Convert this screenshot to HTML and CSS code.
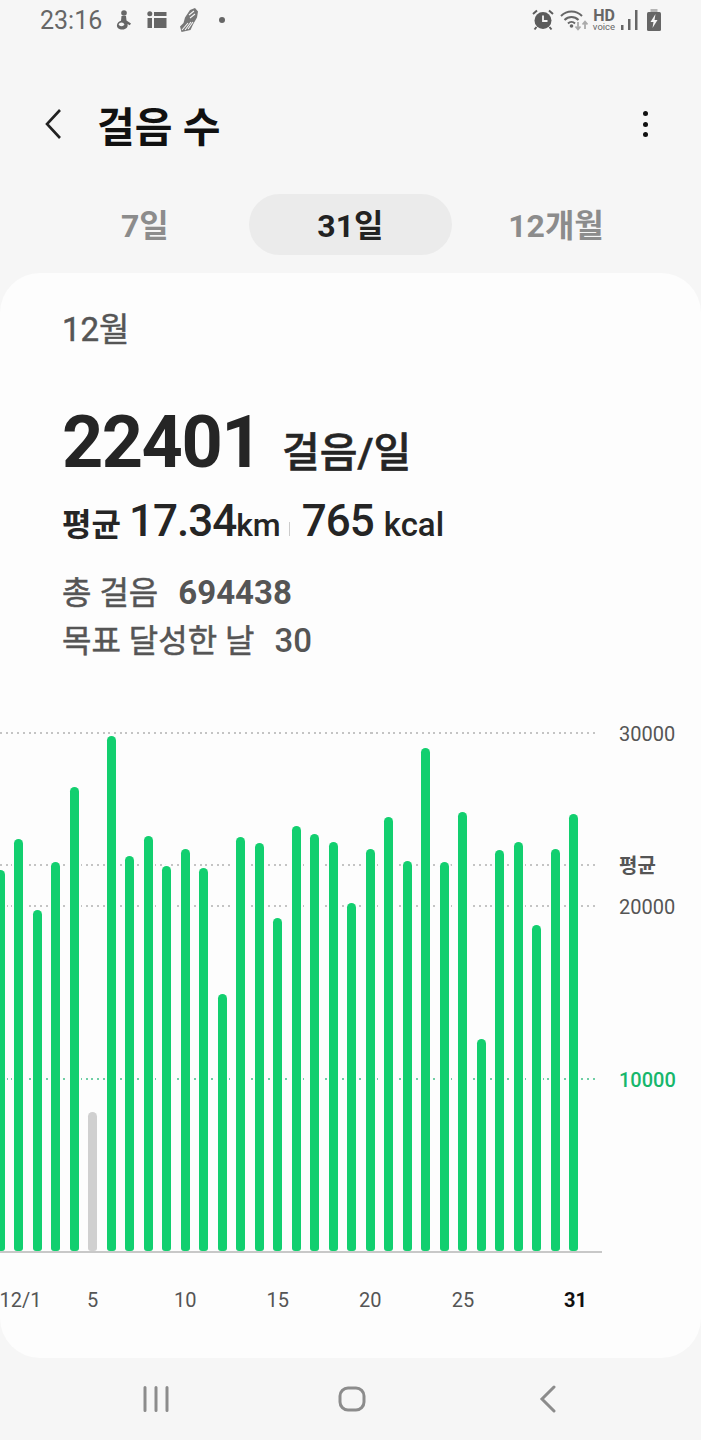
FILE: index.html
```html
<!DOCTYPE html>
<html lang="ko">
  <head>
    <meta charset="utf-8">
    <title>걸음 수</title>
    <link rel="stylesheet" href="styles.css">
  </head>
  <body>
    <div class="status">
      <div class="status-left">
        <span class="time">23:16</span>
        <svg class="ico-walk" width="18" height="20" viewBox="0 0 18 20"><circle cx="10" cy="3" r="2.800" fill="#666"/><path d="M7.500 6h4.500l.5 4.500 4.500 3-1.200 1.800-2.300-1.300c.8 3.200-1.500 5.500-5 5.500-3.800 0-6-2-5.500-4.800.4-2.200 2.500-3.400 4-3.900z" fill="#666"/><ellipse cx="7.500" cy="14.300" rx="2.600" ry="1.900" fill="#f6f6f6"/></svg>
        <svg class="ico-table" width="20" height="18" viewBox="0 0 20 18"><circle cx="2.800" cy="2.800" r="2.500" fill="#666"/><rect x="7" y="1" width="12.500" height="4" fill="#666"/><rect x="0.500" y="7" width="4.500" height="10" fill="#666"/><rect x="7" y="7" width="12.500" height="10" fill="#666"/></svg>
        <svg class="ico-shoe" width="20" height="24" viewBox="0 0 20 24"><path d="M11 2l5-2 3 3.500-1 6-4 7-2.500 5.500-9 2-1.500-5.500 3.500-3.500 1.500-5.500z" fill="#777"/><path d="M3 22l6-7M6 22l6-8M9 21l5-7M10 7l5-4M11 10l5-4" stroke="#f6f6f6" stroke-width="1.100" fill="none"/></svg>
        <span class="dot"></span>
      </div>
      <div class="status-right">
        <svg width="22" height="22" viewBox="0 0 22 22"><path d="M1 5l4-3.500M21 5l-4-3.500" stroke="#5c5c5c" stroke-width="2" fill="none"/><circle cx="11" cy="11.500" r="8.500" fill="#5c5c5c"/><path d="M11 6.500v5.500h4.500" stroke="#f6f6f6" stroke-width="1.800" fill="none"/><path d="M4.500 18l-2 2.500M17.500 18l2 2.500" stroke="#5c5c5c" stroke-width="2"/></svg>
        <svg class="ico-wifi" width="28" height="22" viewBox="0 0 28 22"><path d="M1 7c6-6 15-6 21 0M4.500 11c4-4 10-4 14 0M8 14.500c2-2 5-2 7 0" stroke="#666" stroke-width="2" fill="none"/><circle cx="11.500" cy="17" r="1.800" fill="#666"/><path d="M18 13v7M15.500 17.500l2.500 2.800 2.500-2.800" stroke="#aaa" stroke-width="1.800" fill="none"/><path d="M25 20v-7M22.500 15.500l2.500-2.800 2.500 2.800" stroke="#aaa" stroke-width="1.800" fill="none"/></svg>
        <span class="hd"><b>HD</b><i>voice</i></span>
        <svg class="ico-signal" width="17" height="20" viewBox="0 0 17 20"><rect x="0" y="15" width="2.500" height="5" fill="#666"/><rect x="7" y="9" width="2.500" height="11" fill="#666"/><rect x="14" y="0" width="2.500" height="20" fill="#666"/></svg>
        <svg width="14" height="22" viewBox="0 0 14 22"><rect x="3.500" y="0" width="7" height="3" fill="#b5b5b5"/><rect x="0" y="3" width="14" height="19" rx="1.500" fill="#666"/><path d="M8.500 5L3.500 13h3l-1 6 5-8h-3z" fill="#f6f6f6"/></svg>
      </div>
    </div>

    <header class="topbar">
      <svg class="back" width="18" height="32" viewBox="0 0 18 32"><path d="M16 2L3 16l13 14" stroke="#222" stroke-width="2.600" fill="none"/></svg>
      <h1>걸음 수</h1>
      <div class="more"><span></span><span></span><span></span></div>
    </header>

    <nav class="tabs">
      <div class="tab">7일</div>
      <div class="tab active">31일</div>
      <div class="tab">12개월</div>
    </nav>

    <main class="card">
      <div class="summary">
        <div class="month">12월</div>
        <div class="headline"><span class="big">22401</span><span class="unit">걸음/일</span></div>
        <div class="average">
          <span class="avg-label">평균</span>
          <span class="avg-num">17.34</span><span class="avg-km">km</span>
          <span class="sep"></span>
          <span class="avg-num">765</span>
          <span class="avg-kcal">kcal</span>
        </div>
        <div class="total"><span>총 걸음</span><b>694438</b></div>
        <div class="goal"><span>목표 달성한 날</span><em>30</em></div>
      </div>

      <div class="chart">
        <div class="plot">
          <div class="line" style="bottom: 517px"><span class="line-label">30000</span></div>
          <div class="line" style="bottom: 385px"><span class="line-label avg">평균</span></div>
          <div class="line" style="bottom: 344px"><span class="line-label">20000</span></div>
          <div class="line goal-line" style="bottom: 171px"><span class="line-label">10000</span></div>
          <div class="bars">
            <div class="bar" style="height: 381px"></div>
            <div class="bar" style="height: 412px"></div>
            <div class="bar" style="height: 341px"></div>
            <div class="bar" style="height: 389px"></div>
            <div class="bar" style="height: 464px"></div>
            <div class="bar missed" style="height: 139px"></div>
            <div class="bar" style="height: 515px"></div>
            <div class="bar" style="height: 395px"></div>
            <div class="bar" style="height: 415px"></div>
            <div class="bar" style="height: 385px"></div>
            <div class="bar" style="height: 402px"></div>
            <div class="bar" style="height: 383px"></div>
            <div class="bar" style="height: 257px"></div>
            <div class="bar" style="height: 414px"></div>
            <div class="bar" style="height: 408px"></div>
            <div class="bar" style="height: 333px"></div>
            <div class="bar" style="height: 425px"></div>
            <div class="bar" style="height: 417px"></div>
            <div class="bar" style="height: 409px"></div>
            <div class="bar" style="height: 348px"></div>
            <div class="bar" style="height: 402px"></div>
            <div class="bar" style="height: 434px"></div>
            <div class="bar" style="height: 390px"></div>
            <div class="bar" style="height: 503px"></div>
            <div class="bar" style="height: 389px"></div>
            <div class="bar" style="height: 439px"></div>
            <div class="bar" style="height: 212px"></div>
            <div class="bar" style="height: 401px"></div>
            <div class="bar" style="height: 409px"></div>
            <div class="bar" style="height: 326px"></div>
            <div class="bar" style="height: 402px"></div>
            <div class="bar" style="height: 437px"></div>
          </div>
        </div>
        <div class="days">
          <span class="d1">12/1</span>
          <span class="d5">5</span>
          <span class="d10">10</span>
          <span class="d15">15</span>
          <span class="d20">20</span>
          <span class="d25">25</span>
          <span class="d31">31</span>
        </div>
      </div>
    </main>

    <footer class="navbar">
      <svg width="26" height="26" viewBox="0 0 26 26"><path d="M2 1.500v23M13 1.500v23M24 1.500v23" stroke="#8c8c8c" stroke-width="3" stroke-linecap="round" fill="none"/></svg>
      <svg width="28" height="26" viewBox="0 0 28 26"><rect x="2" y="2" width="24" height="22" rx="8" stroke="#8c8c8c" stroke-width="3" fill="none"/></svg>
      <svg width="18" height="28" viewBox="0 0 18 28"><path d="M15 2L3 14l12 12" stroke="#8c8c8c" stroke-width="3" stroke-linecap="round" fill="none"/></svg>
    </footer>
  </body>
</html>
```

FILE: styles.css
```css
body {
  font-family: Roboto, "Noto Sans CJK KR", sans-serif;
  background: #f6f6f6;
  margin: 0;
  padding: 0;
  height: 1440px;
  overflow: hidden;
}

/* status bar */
.status {
  height: 40px;
  padding: 0 40px;
  display: flex;
  justify-content: space-between;
  align-items: center;
}
.status-left,
.status-right {
  display: flex;
  align-items: center;
}
.time {
  font-size: 25px;
  color: #666;
  margin-right: 12px;
}
.ico-table {
  margin-left: 15px;
}
.ico-shoe {
  margin-left: 12px;
}
.dot {
  width: 6px;
  height: 6px;
  border-radius: 50%;
  background: #666;
  margin-left: 20px;
}
.status-right {
  gap: 6px;
}
.hd {
  display: flex;
  flex-direction: column;
  align-items: center;
  width: 22px;
  margin-left: -1px;
  color: #666;
}
.hd b {
  font-size: 16px;
  line-height: 13px;
}
.hd i {
  font-style: normal;
  font-size: 9.500px;
  line-height: 9px;
}
.ico-signal {
  margin-right: 3px;
}

/* title row */
.topbar {
  height: 118px;
  padding: 0 53px 0 44px;
  display: flex;
  align-items: center;
  margin-top: 25px;
}
.topbar h1 {
  margin: 0 0 0 35px;
  font-size: 41px;
  font-weight: 700;
  color: #111;
  flex: 1;
}
.more {
  display: flex;
  flex-direction: column;
  gap: 5.500px;
}
.more span {
  width: 5px;
  height: 5px;
  border-radius: 50%;
  background: #111;
}

/* period tabs */
.tabs {
  display: grid;
  grid-template-columns: repeat(3, 205.600px);
  padding-left: 42px;
  margin-top: 11px;
}
.tab {
  height: 61px;
  line-height: 64px;
  margin: 0 1px;
  text-align: center;
  font-size: 32px;
  font-weight: 700;
  color: #8c8c8c;
  border-radius: 31px;
}
.tab.active {
  background: #ebebeb;
  color: #222;
}

/* main card */
.card {
  margin-top: 18px;
  height: 1085px;
  background: #fdfdfd;
  border-radius: 40px;
  overflow: hidden;
}
.summary {
  padding: 35px 0 0 62px;
}
.month {
  font-size: 33px;
  line-height: 44px;
  color: #555;
  -webkit-text-stroke: 0.5px #555;
}
.headline {
  margin-top: 47px;
  display: flex;
  align-items: baseline;
  height: 88px;
  line-height: 88px;
  color: #252525;
}
.big {
  font-size: 72px;
  font-weight: 700;
  letter-spacing: -1.500px;
}
.unit {
  font-size: 41px;
  font-weight: 500;
  margin-left: 21px;
  -webkit-text-stroke: 0.6px #252525;
}
.average {
  margin-top: 6px;
  display: flex;
  align-items: baseline;
  height: 56px;
  line-height: 56px;
  color: #252525;
  font-weight: 500;
}
.avg-label {
  font-size: 32px;
  font-weight: 700;
  margin-right: 8px;
}
.avg-num {
  font-size: 44px;
  letter-spacing: -1px;
}
.avg-km {
  font-size: 32px;
}
.sep {
  width: 1px;
  height: 14px;
  background: #ccc;
  margin: 0 12px 0 8px;
}
.avg-kcal {
  font-size: 33px;
  margin-left: 10px;
}
.total,
.goal {
  display: flex;
  align-items: baseline;
  gap: 20px;
  font-size: 32px;
  line-height: 48px;
  color: #555;
}
.total span,
.goal span {
  -webkit-text-stroke: 0.5px #555;
}
.total {
  margin-top: 20px;
}
.total b {
  font-size: 33px;
}
.goal em {
  font-style: normal;
  font-size: 33px;
  font-weight: 500;
}

/* chart */
.chart {
  margin-top: 56px;
}
.plot {
  position: relative;
  width: 602px;
  height: 530px;
  border-bottom: 2px solid #c8c8c8;
}
.plot::after {
  content: "";
  position: absolute;
  left: 0;
  right: 0;
  bottom: -2px;
  height: 2px;
  background: #c8c8c8;
}
.line {
  position: absolute;
  left: 0;
  width: 598px;
  height: 2px;
  background: repeating-linear-gradient(90deg, #c4c4c4 0 2px, transparent 2px 5.700px);
}
.goal-line {
  background: repeating-linear-gradient(90deg, #6fcfa5 0 2px, transparent 2px 5.700px);
}
.line-label {
  position: absolute;
  left: 619px;
  top: -11px;
  font-size: 20px;
  line-height: 26px;
  color: #555;
  white-space: nowrap;
}
.line-label.avg {
  font-weight: 700;
}
.goal-line .line-label {
  color: #17b76c;
  font-weight: 500;
}
.bars {
  position: absolute;
  left: -4.500px;
  bottom: 0;
  display: flex;
  align-items: flex-end;
  gap: 9.530px;
}
.bar {
  width: 9px;
  background: #12cf6f;
  border-radius: 4.500px 4.500px 3px 3px;
  box-shadow: 0 0 0 2px #fdfdfd;
}
.bar.missed {
  background: #d0d0d0;
}
.days {
  display: grid;
  grid-template-columns: repeat(32, 18.530px);
  margin: 34px 0 0 -9.260px;
  font-size: 20px;
  line-height: 26px;
  color: #555;
}
.days span {
  justify-self: center;
  white-space: nowrap;
}
.d1 { grid-column: 2; margin-left: 4px; }
.d5 { grid-column: 6; }
.d10 { grid-column: 11; }
.d15 { grid-column: 16; }
.d20 { grid-column: 21; }
.d25 { grid-column: 26; }
.d31 { grid-column: 32; margin-left: 3px; font-weight: 700; color: #111; }

/* android nav */
.navbar {
  height: 82px;
  display: grid;
  grid-template-columns: repeat(3, 196px);
  justify-content: center;
  justify-items: center;
  align-items: center;
  padding-left: 3px;
}
```
